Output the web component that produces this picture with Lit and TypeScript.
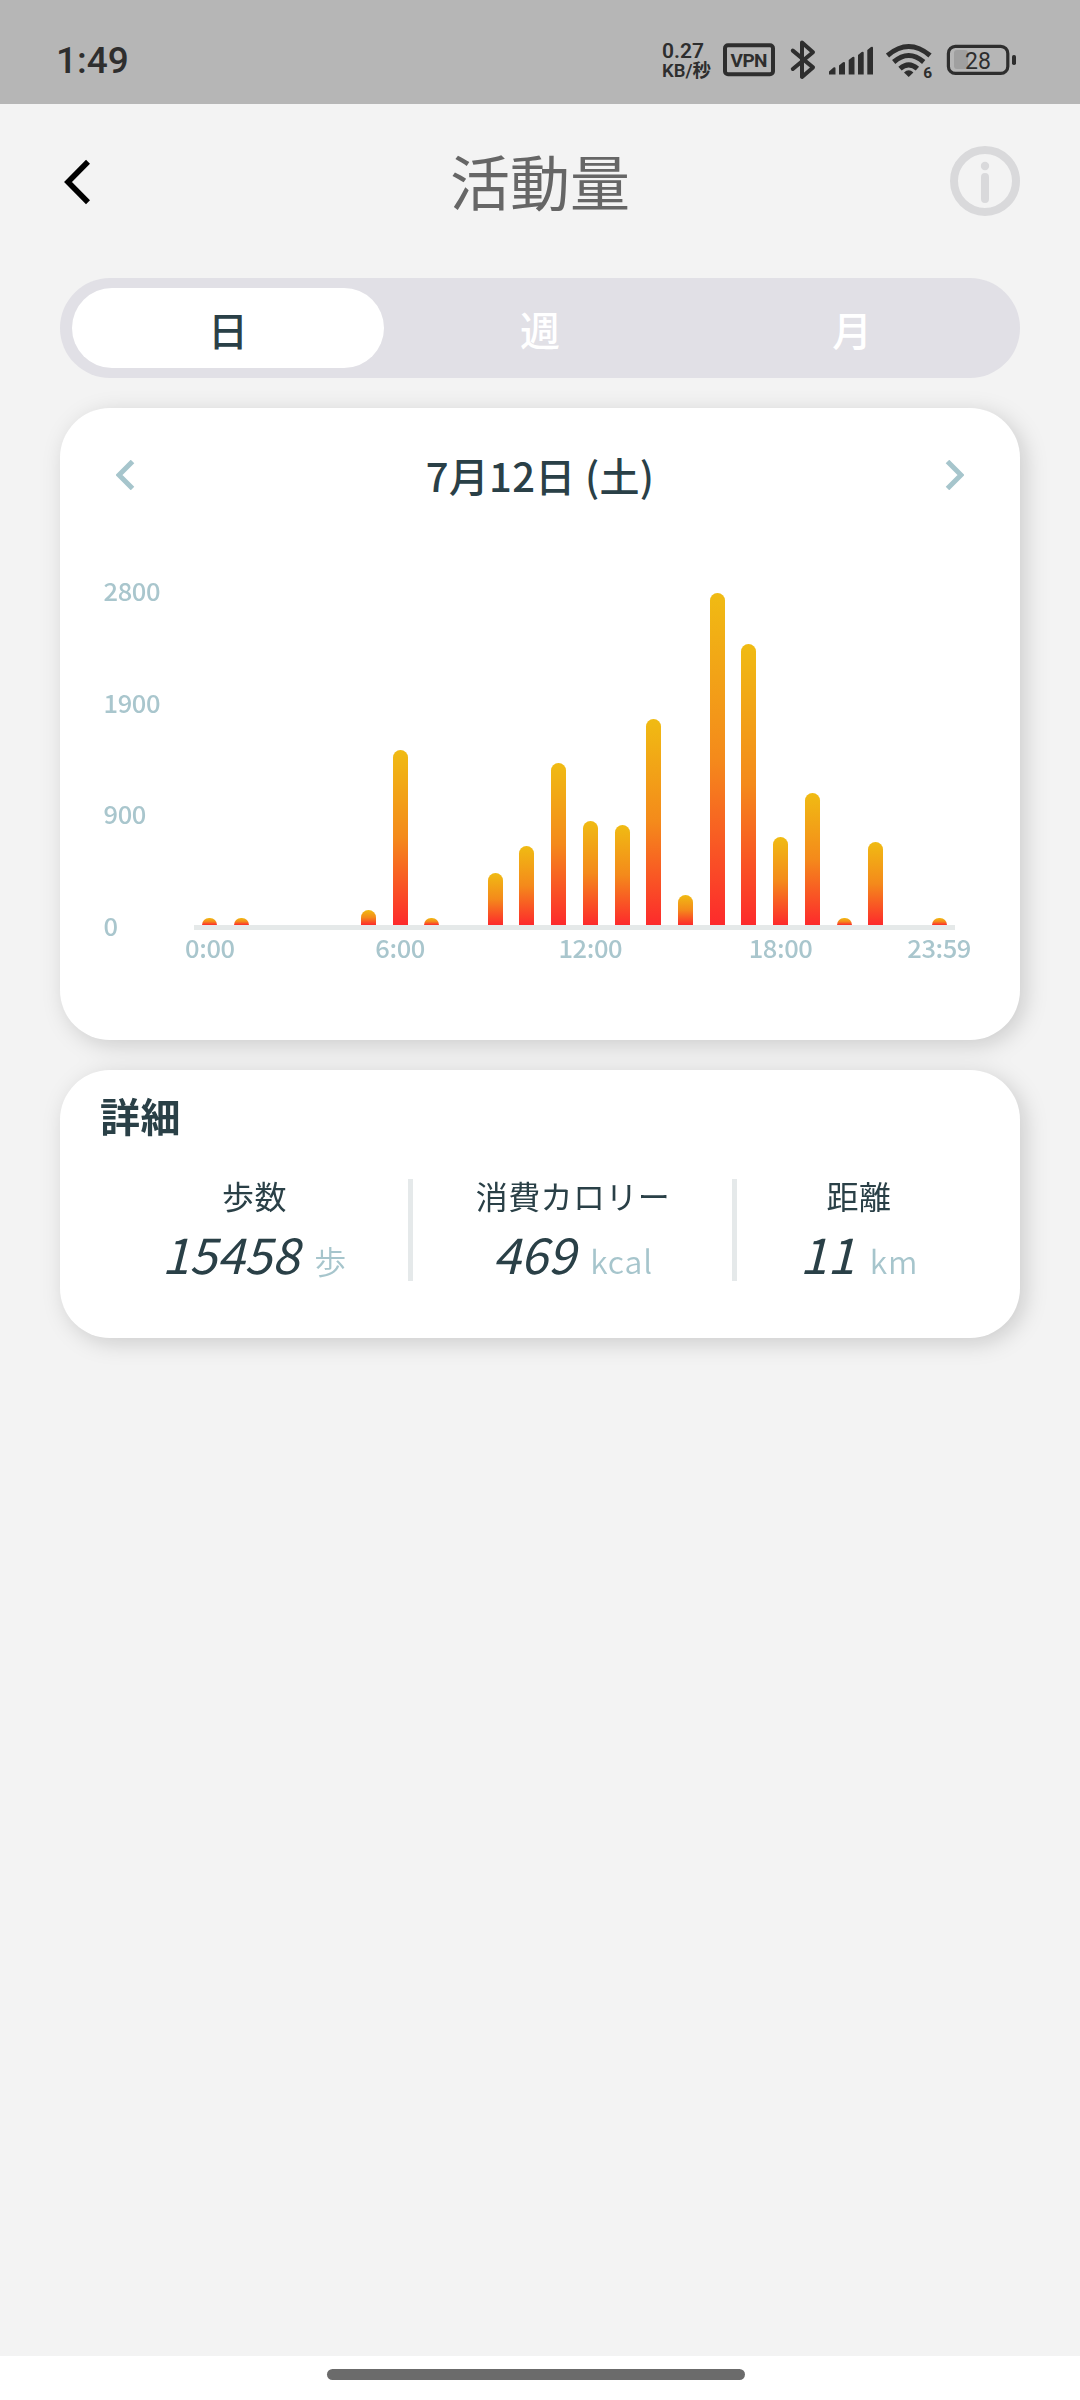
import { LitElement, html, css } from "lit";
import { customElement, property } from "lit/decorators.js";

const JP = css`"Noto Sans CJK JP", "Noto Sans", sans-serif`;

@customElement("status-bar")
class StatusBar extends LitElement {
  static styles = css`
    :host {
      display: flex;
      justify-content: space-between;
      align-items: flex-start;
      height: 104px;
      box-sizing: border-box;
      padding: 36px 62px 0 56px;
      background: #b6b6b6;
      color: #2e2e2e;
      font-family: Roboto, "Noto Sans CJK JP", sans-serif;
    }
    .time {
      font-size: 37px;
      font-weight: 500;
      line-height: 50px;
    }
    .icons {
      display: flex;
      height: 48px;
    }
    .speed {
      display: flex;
      flex-direction: column;
      width: 61px;
      padding-top: 5px;
      white-space: nowrap;
    }
    .rate {
      font-size: 21px;
      line-height: 20px;
      font-weight: 600;
    }
    .unit {
      font-size: 18.5px;
      line-height: 20px;
      font-weight: 600;
    }
    svg {
      display: block;
      fill: currentColor;
    }
    text {
      font-family: Roboto, sans-serif;
    }
  `;

  render() {
    return html`
      <span class="time">1:49</span>
      <div class="icons">
        <div class="speed"><span class="rate">0.27</span><span class="unit">KB/秒</span></div>
        <svg width="62" height="48" viewBox="723 36 62 48">
          <rect x="725" y="45.3" width="48" height="29" rx="3" fill="none" stroke="currentColor" stroke-width="4" />
          <text x="749" y="66.6" font-size="19" font-weight="700" text-anchor="middle" textLength="37">VPN</text>
        </svg>
        <svg width="44" height="48" viewBox="785 36 44 48">
          <path d="M792.8 50.6 813 67.4 802 77V42.4L813 52.2 792.8 69" fill="none" stroke="currentColor" stroke-width="4" stroke-linejoin="round" stroke-linecap="round" />
        </svg>
        <svg width="57" height="48" viewBox="829 36 57 48">
          <path d="M829 74.5V71.5L833.5 67.5Q835.5 66.5 835.5 68.5V74.5ZM839 74.5V65.5L843 62.3Q845 61.3 845 63.3V74.5ZM848.7 74.5V60L852.5 57Q854.5 56 854.5 58V74.5ZM858 74.5V55L861.7 52Q863.7 51 863.7 53V74.5ZM867.3 74.5V50L871 47Q873 46 873 48V74.5Z" />
        </svg>
        <svg width="60" height="48" viewBox="886 36 60 48">
          <g fill="none" stroke="currentColor" stroke-width="5">
            <path d="M887.5 55.5Q908.7 37.5 930 55.5" />
            <path d="M893.7 62Q908.7 49 923.7 62" />
            <path d="M900 68.6Q908.7 61 917.4 68.6" />
          </g>
          <path d="M904 72.5Q908.7 68 913.4 72.5L908.7 77Z" />
          <text x="923.2" y="78" font-size="15.5" font-weight="700">6</text>
        </svg>
        <svg width="72" height="48" viewBox="946 36 72 48">
          <rect x="954" y="50" width="14" height="19" rx="3" fill="#a0a0a0" />
          <rect x="948.4" y="46.4" width="59.4" height="27" rx="7" fill="none" stroke="currentColor" stroke-width="3.2" />
          <rect x="1012" y="55" width="4" height="10" rx="1.8" />
          <text x="978" y="69" font-size="23" text-anchor="middle">28</text>
        </svg>
      </div>
    `;
  }
}

@customElement("page-header")
class PageHeader extends LitElement {
  static styles = css`
    :host {
      display: flex;
      align-items: center;
      justify-content: space-between;
      height: 154px;
      padding: 0 60px;
      font-family: ${JP};
    }
    .side {
      width: 70px;
      height: 70px;
    }
    .title {
      margin: 0 0 2px;
      font-size: 60px;
      line-height: 88px;
      font-weight: 400;
      color: #666;
    }
  `;

  render() {
    return html`
      <svg class="side" viewBox="60 146 70 70">
        <path d="M88 161.8 68 182 88 202.2" fill="none" stroke="#000" stroke-width="5.6" />
      </svg>
      <h1 class="title">活動量</h1>
      <svg class="side" viewBox="0 0 70 70" fill="#d9d9db">
        <circle cx="35" cy="35" r="31" fill="none" stroke="#d9d9db" stroke-width="8" />
        <circle cx="35" cy="20" r="4.2" />
        <rect x="31" y="27" width="8" height="30" rx="4" />
      </svg>
    `;
  }
}

@customElement("period-tabs")
class PeriodTabs extends LitElement {
  static styles = css`
    :host {
      display: flex;
      height: 100px;
      box-sizing: border-box;
      margin: 20px 60px 0;
      padding: 10px 12px;
      border-radius: 50px;
      background: #e1e0e6;
      font-family: ${JP};
    }
    .tab {
      flex: 1;
      border-radius: 40px;
      text-align: center;
      font-size: 40px;
      font-weight: 500;
      line-height: 82px;
      color: #fff;
    }
    .active {
      background: #fff;
      color: #2a4047;
    }
  `;

  render() {
    return html`
      <div class="tab active">日</div>
      <div class="tab">週</div>
      <div class="tab">月</div>
    `;
  }
}

const MAX_STEPS = 2800;
const STEPS = [
  63, 63, 0, 0, 0, 127, 1476, 63, 0, 439, 669, 1366,
  880, 843, 1737, 256, 2800, 2367, 742, 1113, 63, 697, 0, 63,
];
const HOUR_LABELS: Record<number, string> = { 0: "0:00", 6: "6:00", 12: "12:00", 18: "18:00", 23: "23:59" };

@customElement("steps-chart")
class StepsChart extends LitElement {
  @property({ attribute: false }) steps: number[] = STEPS;

  static styles = css`
    :host {
      display: flex;
      padding: 75px 65px 0 43.5px;
      color: #a9c6cd;
      font-family: ${JP};
      font-size: 25.5px;
      font-weight: 500;
      line-height: 30px;
      letter-spacing: -0.4px;
    }
    .scale {
      display: flex;
      flex-direction: column;
      justify-content: space-between;
      width: 90.5px;
      height: 365px;
      margin-top: -18px;
    }
    .plot {
      flex: 1;
    }
    .bars {
      display: grid;
      grid-template-columns: repeat(24, 1fr);
      align-items: end;
      justify-items: center;
      height: 332px;
      border-bottom: 5px solid #e5e9e9;
    }
    .bar {
      width: 15px;
      border-radius: 7.5px 7.5px 0 0;
      background: linear-gradient(#f0bb13, #f48a1b 50%, #fd2a2c);
    }
    .hours {
      display: grid;
      grid-template-columns: repeat(24, 1fr);
      margin-top: 2px;
    }
    .hour {
      display: flex;
      justify-content: center;
      min-width: 0;
      white-space: nowrap;
    }
  `;

  render() {
    return html`
      <div class="scale"><span>2800</span><span>1900</span><span>900</span><span>0</span></div>
      <div class="plot">
        <div class="bars">
          ${this.steps.map((s) => html`<div class="bar" style="height:${((s / MAX_STEPS) * 332).toFixed(1)}px"></div>`)}
        </div>
        <div class="hours">
          ${this.steps.map((_, i) => html`<div class="hour">${HOUR_LABELS[i] ?? ""}</div>`)}
        </div>
      </div>
    `;
  }
}

@customElement("stat-item")
class StatItem extends LitElement {
  @property() label = "";
  @property() value = "";
  @property() unit = "";

  static styles = css`
    :host {
      display: flex;
      flex-direction: column;
      align-items: center;
      font-family: ${JP};
      color: #2a4047;
      white-space: nowrap;
    }
    .label {
      font-size: 32px;
      line-height: 32px;
      font-weight: 400;
      letter-spacing: 0.4px;
      padding-left: 1px;
    }
    .figure {
      display: flex;
      align-items: baseline;
      gap: 15px;
      height: 60px;
      line-height: 60px;
      margin-top: 12px;
      padding-left: 1px;
    }
    .value {
      font-size: 49.5px;
      font-style: italic;
    }
    .unit {
      font-size: 32px;
      font-weight: 350;
      letter-spacing: 0.9px;
      color: #a6c5cc;
    }
  `;

  render() {
    return html`
      <span class="label">${this.label}</span>
      <div class="figure"><span class="value">${this.value}</span><span class="unit">${this.unit}</span></div>
    `;
  }
}

@customElement("app-root")
class AppRoot extends LitElement {
  static styles = css`
    :host {
      display: flex;
      flex-direction: column;
      width: 1080px;
      height: 2400px;
      overflow: hidden;
      background: #f3f3f3;
      font-family: ${JP};
      color: #2a4047;
    }
    .cards {
      display: flex;
      flex-direction: column;
      gap: 30px;
      flex: 1;
      padding: 30px 60px 0;
      filter: drop-shadow(5px 5px 11px rgba(0, 0, 0, 0.16));
    }
    .card {
      background: #fff;
      border-radius: 50px;
      box-sizing: border-box;
    }
    .activity {
      height: 632px;
      padding-top: 32px;
    }
    .date-row {
      display: flex;
      align-items: center;
      justify-content: space-between;
      height: 78px;
      padding: 0 56px;
    }
    .arrow {
      width: 19px;
      height: 30px;
      margin-bottom: 8px;
      fill: none;
      stroke: #a6c5cc;
      stroke-width: 5;
    }
    .date {
      margin-bottom: 8px;
      font-size: 40px;
      font-weight: 500;
      line-height: 60px;
      letter-spacing: 0.3px;
    }
    .details {
      height: 268px;
      padding: 15px 40px 0;
    }
    .heading {
      margin: 0;
      font-size: 40px;
      line-height: 60px;
      font-weight: 700;
      letter-spacing: 0.6px;
    }
    .stats {
      display: grid;
      grid-template-columns: 308px 5px 319px 5px 1fr;
      grid-template-rows: 102px;
      margin-top: 34px;
    }
    .divider {
      background: #e5e9ea;
    }
    .nav {
      display: flex;
      justify-content: center;
      height: 44px;
      box-sizing: border-box;
      padding: 13px 8px 0 0;
      background: #fff;
    }
    .handle {
      width: 418px;
      height: 11px;
      border-radius: 6px;
      background: #6b6b6b;
    }
  `;

  render() {
    return html`
      <status-bar></status-bar>
      <page-header></page-header>
      <period-tabs></period-tabs>
      <main class="cards">
        <section class="card activity">
          <div class="date-row">
            <svg class="arrow" viewBox="0 0 19 30"><path d="M16.5 1.5 3 15 16.5 28.5" /></svg>
            <span class="date">7月12日 (土)</span>
            <svg class="arrow" viewBox="0 0 19 30"><path d="M2.5 1.5 16 15 2.5 28.5" /></svg>
          </div>
          <steps-chart></steps-chart>
        </section>
        <section class="card details">
          <h2 class="heading">詳細</h2>
          <div class="stats">
            <stat-item label="歩数" value="15458" unit="歩"></stat-item>
            <div class="divider"></div>
            <stat-item label="消費カロリー" value="469" unit="kcal"></stat-item>
            <div class="divider"></div>
            <stat-item label="距離" value="11" unit="km"></stat-item>
          </div>
        </section>
      </main>
      <footer class="nav"><div class="handle"></div></footer>
    `;
  }
}
